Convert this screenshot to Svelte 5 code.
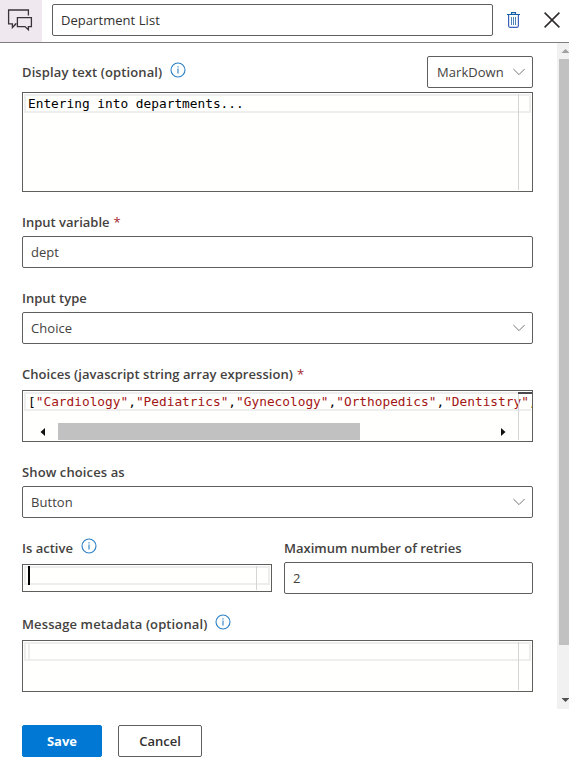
<script>
  const choices = ['Cardiology', 'Pediatrics', 'Gynecology', 'Orthopedics', 'Dentistry'];
</script>

{#snippet info()}
  <svg class="info" width="16" height="16" viewBox="0 0 16 16">
    <circle cx="8" cy="8" r="7" fill="none" stroke="#2b7fc4" stroke-width="1.1" />
    <path d="M8 6.6V11.4M8 4.3V5.5" stroke="#2b7fc4" stroke-width="1.1" />
  </svg>
{/snippet}

{#snippet chevron()}
  <svg class="chevron" width="12" height="8" viewBox="0 0 12 8">
    <path d="M.4 1L6 6.6L11.6 1" fill="none" stroke="#77757a" stroke-width="1" />
  </svg>
{/snippet}

<div class="panel">
  <header>
    <div class="kind">
      <svg width="26" height="24" viewBox="0 0 26 24">
        <path d="M7.8 15.9H8.6L5.4 19.6V15.9H1.6V2H21.4V7.6M5.4 19.6L9.2 15.9" fill="none" stroke="#38343a" stroke-width="1.3" />
        <path d="M10.4 9.6H24.4V18.6H21.4V21.8L18 18.6H10.4Z" fill="none" stroke="#38343a" stroke-width="1.3" />
      </svg>
    </div>
    <div class="box title"><span>Department List</span></div>
    <svg class="trash" width="13" height="16" viewBox="0 0 13 16">
      <path d="M0 2.5H13M4.5 2V.6H8.5V2" fill="none" stroke="#1460a8" stroke-width="1.2" />
      <path d="M1.6 3V13.5Q1.6 15.3 3 15.3H10Q11.4 15.3 11.4 13.5V3" fill="none" stroke="#3b61b8" stroke-width="1.2" />
      <path d="M4.5 5V13M6.5 5V13M8.5 5V13" stroke="#4c82b8" stroke-width="1" />
    </svg>
    <svg class="close" width="16" height="16" viewBox="0 0 16 16">
      <path d="M.6 .6L15.4 15.4M15.4 .6L.6 15.4" stroke="#2c2a29" stroke-width="1.5" />
    </svg>
  </header>

  <div class="body">
    <main>
      <div class="label top"><span class="wide">Display text (optional)</span>{@render info()}
        <div class="box format"><span>MarkDown</span>{@render chevron()}</div>
      </div>
      <div class="editor tall"><div class="line"><code>Entering into departments...</code></div><i class="ruler"></i></div>

      <div class="label"><span>Input variable</span><b>*</b></div>
      <div class="box"><span>dept</span></div>

      <div class="label"><span>Input type</span></div>
      <div class="box"><span>Choice</span>{@render chevron()}</div>

      <div class="label"><span class="long">Choices (javascript string array expression)</span><b>*</b></div>
      <div class="editor choices">
        <div class="line"><code>[{#each choices as c}<em>"{c}"</em>,{/each}</code></div>
        <div class="hscroll">
          <svg width="5" height="8" viewBox="0 0 5 8"><path d="M5 0V8L.5 4Z" fill="#111" /></svg>
          <div class="thumb"></div>
          <svg width="5" height="8" viewBox="0 0 5 8"><path d="M0 0V8L4.5 4Z" fill="#111" /></svg>
        </div>
        <i class="ruler"></i><i class="mark"></i>
      </div>

      <div class="label"><span class="wide">Show choices as</span></div>
      <div class="box"><span>Button</span>{@render chevron()}</div>

      <div class="pair">
        <div>
          <div class="label"><span>Is active</span>{@render info()}</div>
          <div class="editor small"><div class="line"><i class="caret"></i></div><i class="ruler"></i></div>
        </div>
        <div>
          <div class="label"><span>Maximum number of retries</span></div>
          <div class="box"><span>2</span></div>
        </div>
      </div>

      <div class="label"><span class="wide">Message metadata (optional)</span>{@render info()}</div>
      <div class="editor"><div class="line"><i class="caret faint"></i></div><i class="ruler"></i></div>
    </main>
    <div class="vscroll">
      <svg width="10" height="16" viewBox="0 0 10 16"><path d="M2.5 10L6.5 6L10.5 10Z" fill="#a0a0a0" /></svg>
      <div class="thumb"></div>
      <svg class="down" width="10" height="16" viewBox="0 0 10 16"><path d="M2.5 5L6.5 9L10.5 5Z" fill="#505050" /></svg>
    </div>
  </div>

  <footer>
    <button class="save"><span>Save</span></button>
    <button><span>Cancel</span></button>
  </footer>
</div>

<style>
  :global(body) { margin: 0; background: #fff; }
  * { box-sizing: border-box; }
  .panel {
    width: 569px; height: 772px; overflow: hidden; background: #fff; color: #444240;
    font: 13px/20px "Open Sans", "Noto Sans", sans-serif;
    display: flex; flex-direction: column;
  }
  header { height: 43px; flex: none; display: flex; border-bottom: 1px solid #807e7c; }
  .kind { width: 42px; padding: 8px 0 0 7px; background: #efe8ef; }
  .box {
    height: 32px; border: 1px solid #605e5c; border-radius: 2px; padding: 0 7px 0 8px; letter-spacing: .05px;
    display: flex; align-items: center; justify-content: space-between; background: #fff; white-space: nowrap;
  }
  .title { width: 441px; margin: 4px 0 0 10px; color: #323130; }
  .trash { margin: 12px 0 0 14px; }
  .close { margin: 12px 0 0 24px; }
  .body { height: 666px; flex: none; display: flex; justify-content: space-between; }
  main { width: 511px; margin-left: 22px; padding-top: 13px; }
  .label { height: 44px; display: flex; padding-top: 20px; font-weight: 600; white-space: nowrap; }
  .label b { color: #a4262c; font-weight: 500; margin-left: 4px; }
  .wide { letter-spacing: .11px; }
  .long { letter-spacing: .05px; }
  .info { margin: 0 0 0 8px; }
  .top { height: 36px; padding-top: 6px; }
  .top .format { width: 106px; margin: -6px 0 0 auto; padding-left: 9px; font-weight: 400; }
  .editor {
    height: 52px; margin: 2px 0 0; border: 1px solid #605e5c; background: #fffffd;
    position: relative; overflow: hidden; padding: 1px 1px 0;
  }
  .tall { height: 100px; margin-top: 0; }
  .line { height: 19px; border: 2px solid #eee; padding-left: 2px; display: flex; }
  .choices .line { border-right: 0; }
  code { font: 12.81px/16px "DejaVu Sans Mono", monospace; color: #000; white-space: pre; }
  em { font-style: normal; color: #a31515; }
  .ruler { position: absolute; right: 13px; top: 1px; bottom: 1px; width: 1px; background: #d5d5d5; }
  .mark { position: absolute; right: 0; top: 1px; height: 2px; width: 14px; background: #4b494d; }
  .caret { width: 2px; height: 19px; margin-top: -2px; background: #000; }
  .faint { background: #eee; }
  .hscroll { display: flex; align-items: center; height: 17px; margin: 12px 0 0 16px; }
  .hscroll .thumb { width: 302px; height: 17px; background: #c1c1c1; margin: 0 141px 0 13px; flex: none; }
  .hscroll svg { flex: none; }
  .pair { display: flex; gap: 12px; }
  .pair > div { width: 249px; }
  .pair > div:first-child { width: 250px; }
  .small { height: 28px; }
  .small .ruler { right: 14px; }
  .vscroll { width: 12px; background: #f1f1f1; display: flex; flex-direction: column; align-items: flex-end; }
  .vscroll .thumb { width: 10px; height: 586px; background: #c1c1c1; }
  .down { margin-top: auto; }
  footer { display: flex; gap: 16px; padding: 16px 22px; }
  button {
    width: 84px; height: 32px; padding: 0; border: 1px solid #605e5c; border-radius: 2px; background: #fff;
    font: 600 13px/20px "Open Sans", "Noto Sans", sans-serif; color: #323130;
  }
  .save { width: 80px; background: #0078d4; border-color: #0078d4; color: #fff; font-weight: 700; }
</style>
